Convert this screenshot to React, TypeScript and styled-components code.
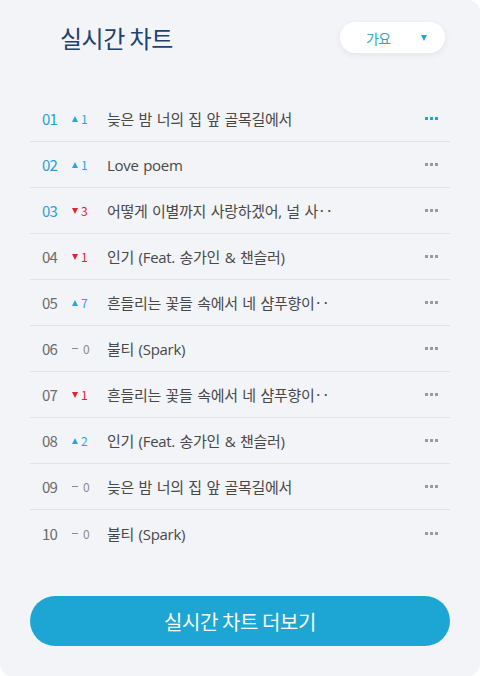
import React from "react";
import styled, { createGlobalStyle } from "styled-components";

const Global = createGlobalStyle`
  html, body { margin: 0; padding: 0; background: #ffffff; }
  body { font-family: "Noto Sans CJK KR", "Noto Sans", sans-serif; }
  * { box-sizing: border-box; }
`;

const Card = styled.div`
  width: 480px;
  height: 676px;
  background: #f3f4f8;
  border-radius: 0 12px 12px 12px;
  padding: 22px 30px 30px 30px;
  display: flex;
  flex-direction: column;
`;

const Header = styled.div`
  display: flex;
  align-items: center;
  justify-content: space-between;
  height: 31px;
  padding-left: 30px;
  padding-right: 5px;
`;

const Title = styled.h1`
  margin: 0;
  font-size: 24px;
  font-weight: 400;
  letter-spacing: -0.5px;
  color: #1f426f;
  line-height: 1;
`;

const Select = styled.button`
  width: 105px;
  height: 31px;
  border: none;
  border-radius: 16px;
  background: #ffffff;
  box-shadow: 0 2px 6px rgba(30, 50, 90, 0.08);
  display: flex;
  align-items: center;
  padding: 0 18px 0 26px;
  justify-content: space-between;
  font-family: inherit;
  font-size: 14px;
  letter-spacing: -0.6px;
  color: #3b9fc9;
`;

const Caret = styled.span`
  width: 0;
  height: 0;
  border-left: 3.5px solid transparent;
  border-right: 3.5px solid transparent;
  border-top: 6px solid #1da5d3;
`;

const List = styled.ol`
  list-style: none;
  margin: 43px 0 0 0;
  padding: 0;
`;

const Row = styled.li<{ $last?: boolean }>`
  height: 46px;
  display: flex;
  align-items: center;
  padding: 0 12px;
  border-bottom: ${(p) => (p.$last ? "none" : "1px solid #e1e3e8")};
`;

const Rank = styled.span<{ $top: boolean }>`
  width: 30px;
  font-size: 15px;
  letter-spacing: -0.8px;
  color: ${(p) => (p.$top ? "#2a9fd6" : "#6b6b6b")};
`;

const Change = styled.span<{ $dir: "up" | "down" | "same" }>`
  width: 35px;
  display: flex;
  align-items: center;
  gap: 3px;
  font-size: 12px;
  color: ${(p) =>
    p.$dir === "up" ? "#2aa6dc" : p.$dir === "down" ? "#e8202a" : "#8a8a8a"};
`;

const Tri = styled.span<{ $dir: "up" | "down" }>`
  width: 0;
  height: 0;
  border-left: 3.5px solid transparent;
  border-right: 3.5px solid transparent;
  ${(p) =>
    p.$dir === "up"
      ? "border-bottom: 6px solid #2aa6dc;"
      : "border-top: 6px solid #e8202a;"}
`;

const Dash = styled.span`
  width: 6px;
  height: 1px;
  background: #8a8a8a;
  margin-right: 2px;
`;

const Song = styled.span`
  flex: 1;
  min-width: 0;
  max-width: 245px;
  font-family: "Open Sans", "Noto Sans CJK KR", sans-serif;
  font-size: 15px;
  letter-spacing: -0.3px;
  word-spacing: 1px;
  color: #484848;
  white-space: nowrap;
  overflow: hidden;
`;

const More = styled.svg`
  display: block;
`;

const MoreButton = styled.button`
  width: 46px;
  height: 30px;
  margin-left: auto;
  border: none;
  background: transparent;
  padding: 0;
  display: flex;
  align-items: center;
  justify-content: flex-end;
`;

const CTA = styled.button`
  margin-top: 40px;
  height: 50px;
  width: 100%;
  border: none;
  border-radius: 25px;
  background: #1da5d3;
  color: #ffffff;
  font-family: inherit;
  font-size: 20px;
  letter-spacing: -0.4px;
`;

type Item = { rank: string; dir: "up" | "down" | "same"; n: number; title: string };

const items: Item[] = [
  { rank: "01", dir: "up", n: 1, title: "늦은 밤 너의 집 앞 골목길에서" },
  { rank: "02", dir: "up", n: 1, title: "Love poem" },
  { rank: "03", dir: "down", n: 3, title: "어떻게 이별까지 사랑하겠어, 널 사‥" },
  { rank: "04", dir: "down", n: 1, title: "인기 (Feat. 송가인 & 챈슬러)" },
  { rank: "05", dir: "up", n: 7, title: "흔들리는 꽃들 속에서 네 샴푸향이‥" },
  { rank: "06", dir: "same", n: 0, title: "불티 (Spark)" },
  { rank: "07", dir: "down", n: 1, title: "흔들리는 꽃들 속에서 네 샴푸향이‥" },
  { rank: "08", dir: "up", n: 2, title: "인기 (Feat. 송가인 & 챈슬러)" },
  { rank: "09", dir: "same", n: 0, title: "늦은 밤 너의 집 앞 골목길에서" },
  { rank: "10", dir: "same", n: 0, title: "불티 (Spark)" },
];

function Dots({ active }: { active: boolean }) {
  const c = active ? "#1da5d3" : "#9a9a9a";
  return (
    <More width="13" height="3" viewBox="0 0 13 3">
      <rect x="0" y="0" width="3" height="3" fill={c} />
      <rect x="5" y="0" width="3" height="3" fill={c} />
      <rect x="10" y="0" width="3" height="3" fill={c} />
    </More>
  );
}

export default function App() {
  return (
    <>
      <Global />
      <Card>
        <Header>
          <Title>실시간 차트</Title>
          <Select>
            <span>가요</span>
            <Caret />
          </Select>
        </Header>
        <List>
          {items.map((it, i) => (
            <Row key={i} $last={i === items.length - 1}>
              <Rank $top={i < 3}>{it.rank}</Rank>
              <Change $dir={it.dir}>
                {it.dir === "same" ? <Dash /> : <Tri $dir={it.dir} />}
                {it.n}
              </Change>
              <Song>{it.title}</Song>
              <MoreButton>
                <Dots active={i === 0} />
              </MoreButton>
            </Row>
          ))}
        </List>
        <CTA>실시간 차트 더보기</CTA>
      </Card>
    </>
  );
}
